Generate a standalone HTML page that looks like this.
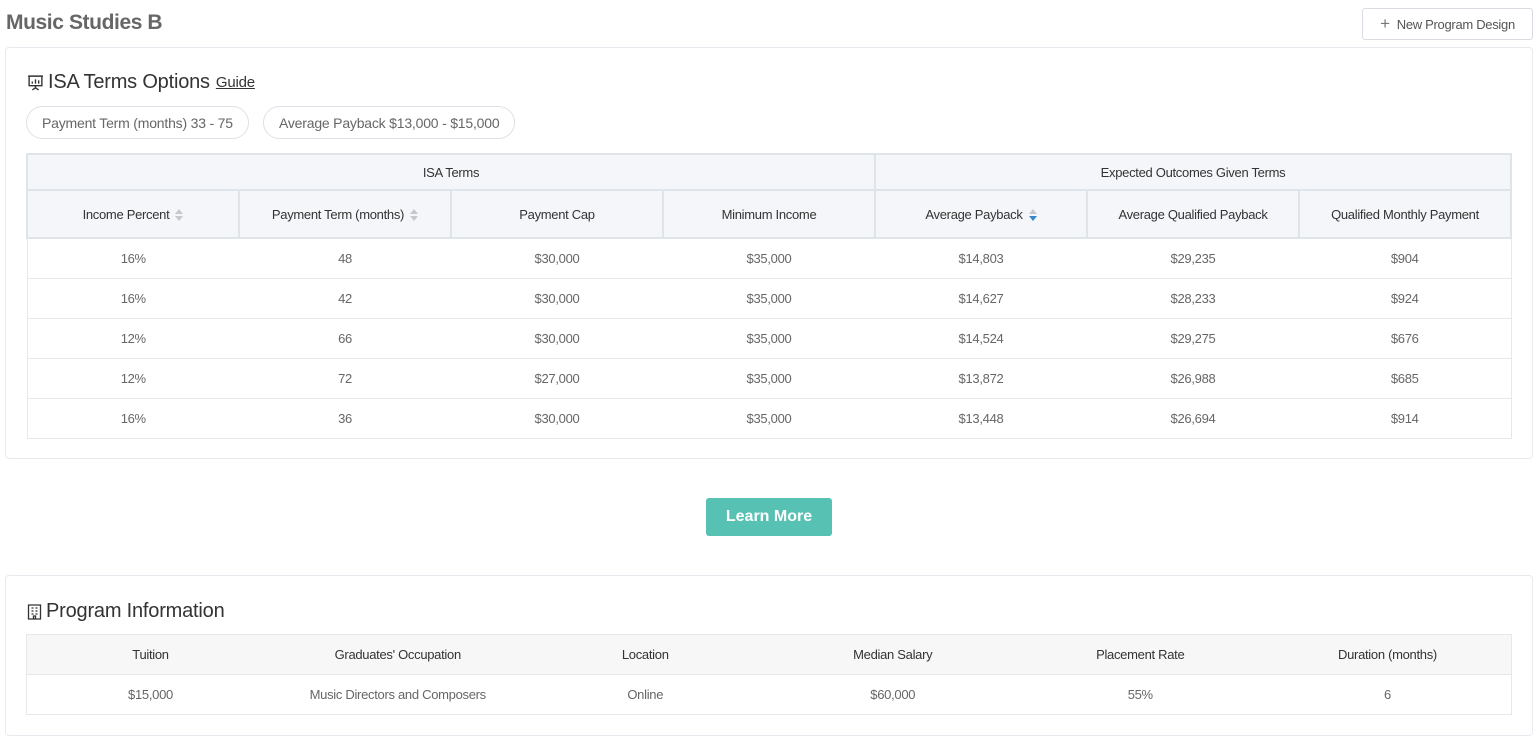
<!DOCTYPE html>
<html><head><meta charset="utf-8"><style>
*{box-sizing:border-box;margin:0;padding:0}
body{width:1537px;height:744px;background:#fff;font-family:"Liberation Sans",sans-serif;color:#555;position:relative;overflow:hidden}
.title{position:absolute;left:6px;top:11px;font-size:21px;font-weight:bold;color:#666;letter-spacing:-0.4px}
.nbtn{position:absolute;left:1362px;top:8px;width:171px;height:32px;border:1px solid #d9dce3;border-radius:3px;font-size:13px;color:#555;display:flex;align-items:center;justify-content:center;letter-spacing:-0.3px}
.nbtn span{font-size:17px;margin-right:7px;color:#777;font-weight:300}
.card{position:absolute;left:5px;width:1528px;border:1px solid #e8eaef;border-radius:4px}
h2{position:absolute;left:21px;font-size:20px;font-weight:normal;color:#333;display:flex;align-items:center;letter-spacing:-0.2px}
h2 svg{margin-right:4px}
h2 u{font-size:15px;margin-left:6px;color:#333}
.pill{position:absolute;top:58px;height:33px;border:1px solid #dde0e6;border-radius:17px;font-size:14px;color:#666;display:flex;align-items:center;padding:0 15px;letter-spacing:-0.2px}
table{position:absolute;left:20px;border-collapse:collapse;table-layout:fixed;width:1486px;font-size:13px;letter-spacing:-0.3px}
th{font-weight:normal;color:#333;background:#f4f6f9;border:2px solid #dfe3ea}
td{text-align:center;color:#666;border-bottom:1px solid #e6e8ec;height:40px}
.t1{border:1px solid #e6e8ec}
.arr{display:inline-block;vertical-align:middle;margin-left:6px;width:8px;height:12px;position:relative}
.arr:before,.arr:after{content:"";position:absolute;left:0;border-left:4px solid transparent;border-right:4px solid transparent}
.arr:before{top:0;border-bottom:5px solid #c4c8cf}
.arr:after{bottom:0;border-top:5px solid #c4c8cf}
.arr.d:after{border-top-color:#3a86c8}
.lm{position:absolute;left:706px;top:498px;width:126px;height:38px;background:#57c2b3;border-radius:3px;color:#fff;font-weight:bold;font-size:16px;display:flex;align-items:center;justify-content:center}
.t2{border:1px solid #e6e8ec}
.t2 th{background:#f7f7f7;border:none;border-bottom:1px solid #e6e8ec;height:40px}
</style></head><body>
<div class="title">Music Studies B</div>
<div class="nbtn"><span>+</span>New Program Design</div>

<div class="card" style="top:47px;height:412px">
<h2 style="top:23px"><svg width="17" height="17" viewBox="0 0 16 16" fill="none" stroke="#333" stroke-width="1.3"><path d="M1 2h14M2 2v9h12V2M8 11v2M5 15l3-2 3 2"/><path d="M5 9V7M8 9V5M11 9V6"/></svg>ISA Terms Options<u>Guide</u></h2>
<div class="pill" style="left:20px">Payment Term (months) 33 - 75</div>
<div class="pill" style="left:257px">Average Payback $13,000 - $15,000</div>
<table class="t1" style="top:105px">
<tr><th colspan="4" style="height:36px">ISA Terms</th><th colspan="3">Expected Outcomes Given Terms</th></tr>
<tr style="height:48px"><th>Income Percent<i class="arr"></i></th><th>Payment Term (months)<i class="arr"></i></th><th>Payment Cap</th><th>Minimum Income</th><th>Average Payback<i class="arr d"></i></th><th>Average Qualified Payback</th><th>Qualified Monthly Payment</th></tr>
<tr><td>16%</td><td>48</td><td>$30,000</td><td>$35,000</td><td>$14,803</td><td>$29,235</td><td>$904</td></tr>
<tr><td>16%</td><td>42</td><td>$30,000</td><td>$35,000</td><td>$14,627</td><td>$28,233</td><td>$924</td></tr>
<tr><td>12%</td><td>66</td><td>$30,000</td><td>$35,000</td><td>$14,524</td><td>$29,275</td><td>$676</td></tr>
<tr><td>12%</td><td>72</td><td>$27,000</td><td>$35,000</td><td>$13,872</td><td>$26,988</td><td>$685</td></tr>
<tr><td>16%</td><td>36</td><td>$30,000</td><td>$35,000</td><td>$13,448</td><td>$26,694</td><td>$914</td></tr>
</table>
</div>

<div class="lm">Learn More</div>

<div class="card" style="top:575px;height:161px">
<h2 style="top:24px"><svg width="15" height="16" viewBox="0 0 14 16" fill="none" stroke="#333" stroke-width="1.3"><path d="M1 1h12v14H1zM1 15h12M4 4h2M8 4h2M4 7h2M8 7h2M4 10h2M8 10h2M6 15v-3h2v3"/></svg>Program Information</h2>
<table class="t2" style="top:58px">
<tr><th>Tuition</th><th>Graduates' Occupation</th><th>Location</th><th>Median Salary</th><th>Placement Rate</th><th>Duration (months)</th></tr>
<tr><td style="border:none">$15,000</td><td style="border:none">Music Directors and Composers</td><td style="border:none">Online</td><td style="border:none">$60,000</td><td style="border:none">55%</td><td style="border:none">6</td></tr>
</table>
</div>
</body></html>
